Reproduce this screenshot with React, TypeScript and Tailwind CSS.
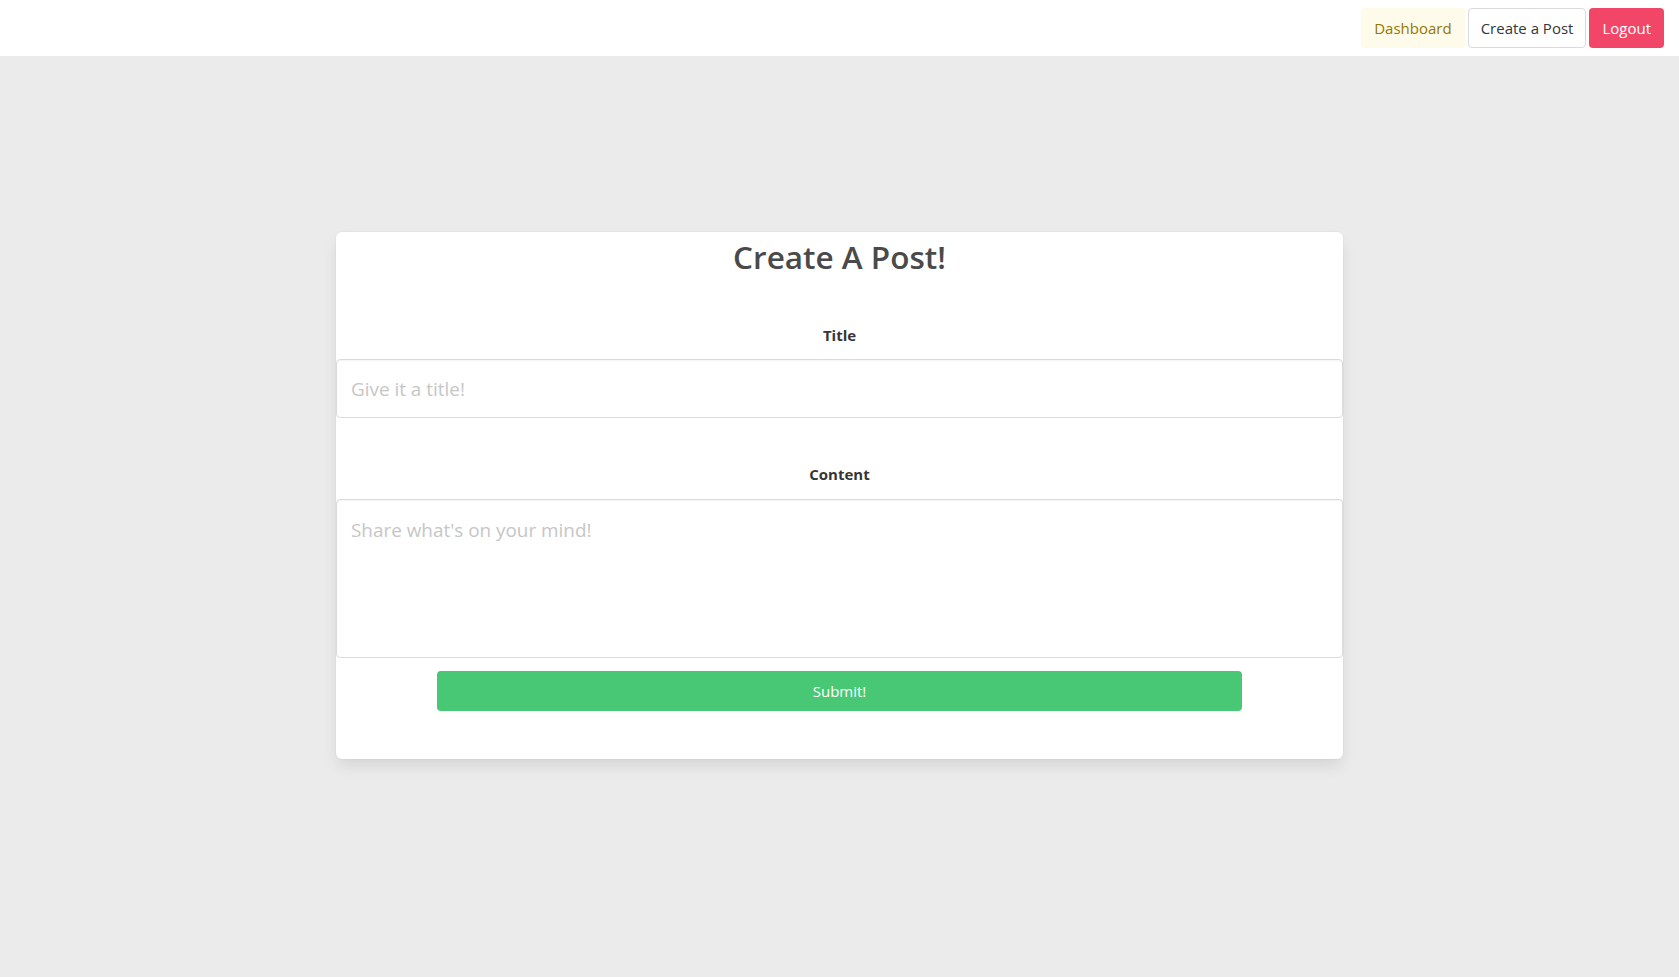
import React from "react";

export default function App() {
  return (
    <div
      className="min-h-screen bg-[#ebebeb] text-[#4a4a4a]"
      style={{ fontFamily: '"Open Sans", "Noto Sans", sans-serif' }}
    >
      <nav className="h-[56px] bg-white flex items-center justify-end pr-[15px] gap-[3px]">
        <a className="h-[40px] px-[13px] flex items-center rounded-[4px] bg-[#fffbeb] text-[#947600] text-[15px] cursor-pointer">
          Dashboard
        </a>
        <a className="h-[40px] px-[12px] flex items-center rounded-[4px] bg-white border border-[#dbdbdb] text-[#363636] text-[15px] cursor-pointer">
          Create a Post
        </a>
        <a className="h-[40px] px-[13px] flex items-center rounded-[4px] bg-[#f14668] text-white text-[15px] cursor-pointer">
          Logout
        </a>
      </nav>

      <main className="pt-[176px]">
        <div className="w-[1007px] mx-auto bg-white rounded-[6px] shadow-[0_8px_16px_-2px_rgba(10,10,10,0.1),0_0_0_1px_rgba(10,10,10,0.02)] pt-[7px] pb-[48px]">
          <h1 className="text-center text-[31.5px] leading-[36px] font-semibold text-[#4a4a4a]">
            Create A Post!
          </h1>

          <div className="mt-[48px]">
            <label className="block text-center text-[15px] leading-[24px] font-bold text-[#363636] mb-[12px]">
              Title
            </label>
            <input
              className="block w-full h-[59px] px-[14px] border border-[#dbdbdb] rounded-[4px] text-[18.9px] text-[#363636] placeholder:text-[#c6c6c6] shadow-[inset_0_1px_2px_rgba(10,10,10,0.05)] outline-none"
              placeholder="Give it a title!"
            />
          </div>

          <div className="mt-[44px]">
            <label className="block text-center text-[15px] leading-[24px] font-bold text-[#363636] mb-[13px]">
              Content
            </label>
            <textarea
              className="block w-full h-[159px] px-[14px] pt-[15px] border border-[#dbdbdb] rounded-[4px] text-[18.9px] leading-[30px] text-[#363636] placeholder:text-[#c6c6c6] shadow-[inset_0_1px_2px_rgba(10,10,10,0.05)] outline-none resize-none"
              placeholder="Share what's on your mind!"
            />
          </div>

          <div className="mt-[13px] flex justify-center">
            <button className="w-[805px] h-[40px] rounded-[4px] bg-[#48c774] text-white text-[15px]">
              Submit!
            </button>
          </div>
        </div>
      </main>
    </div>
  );
}
